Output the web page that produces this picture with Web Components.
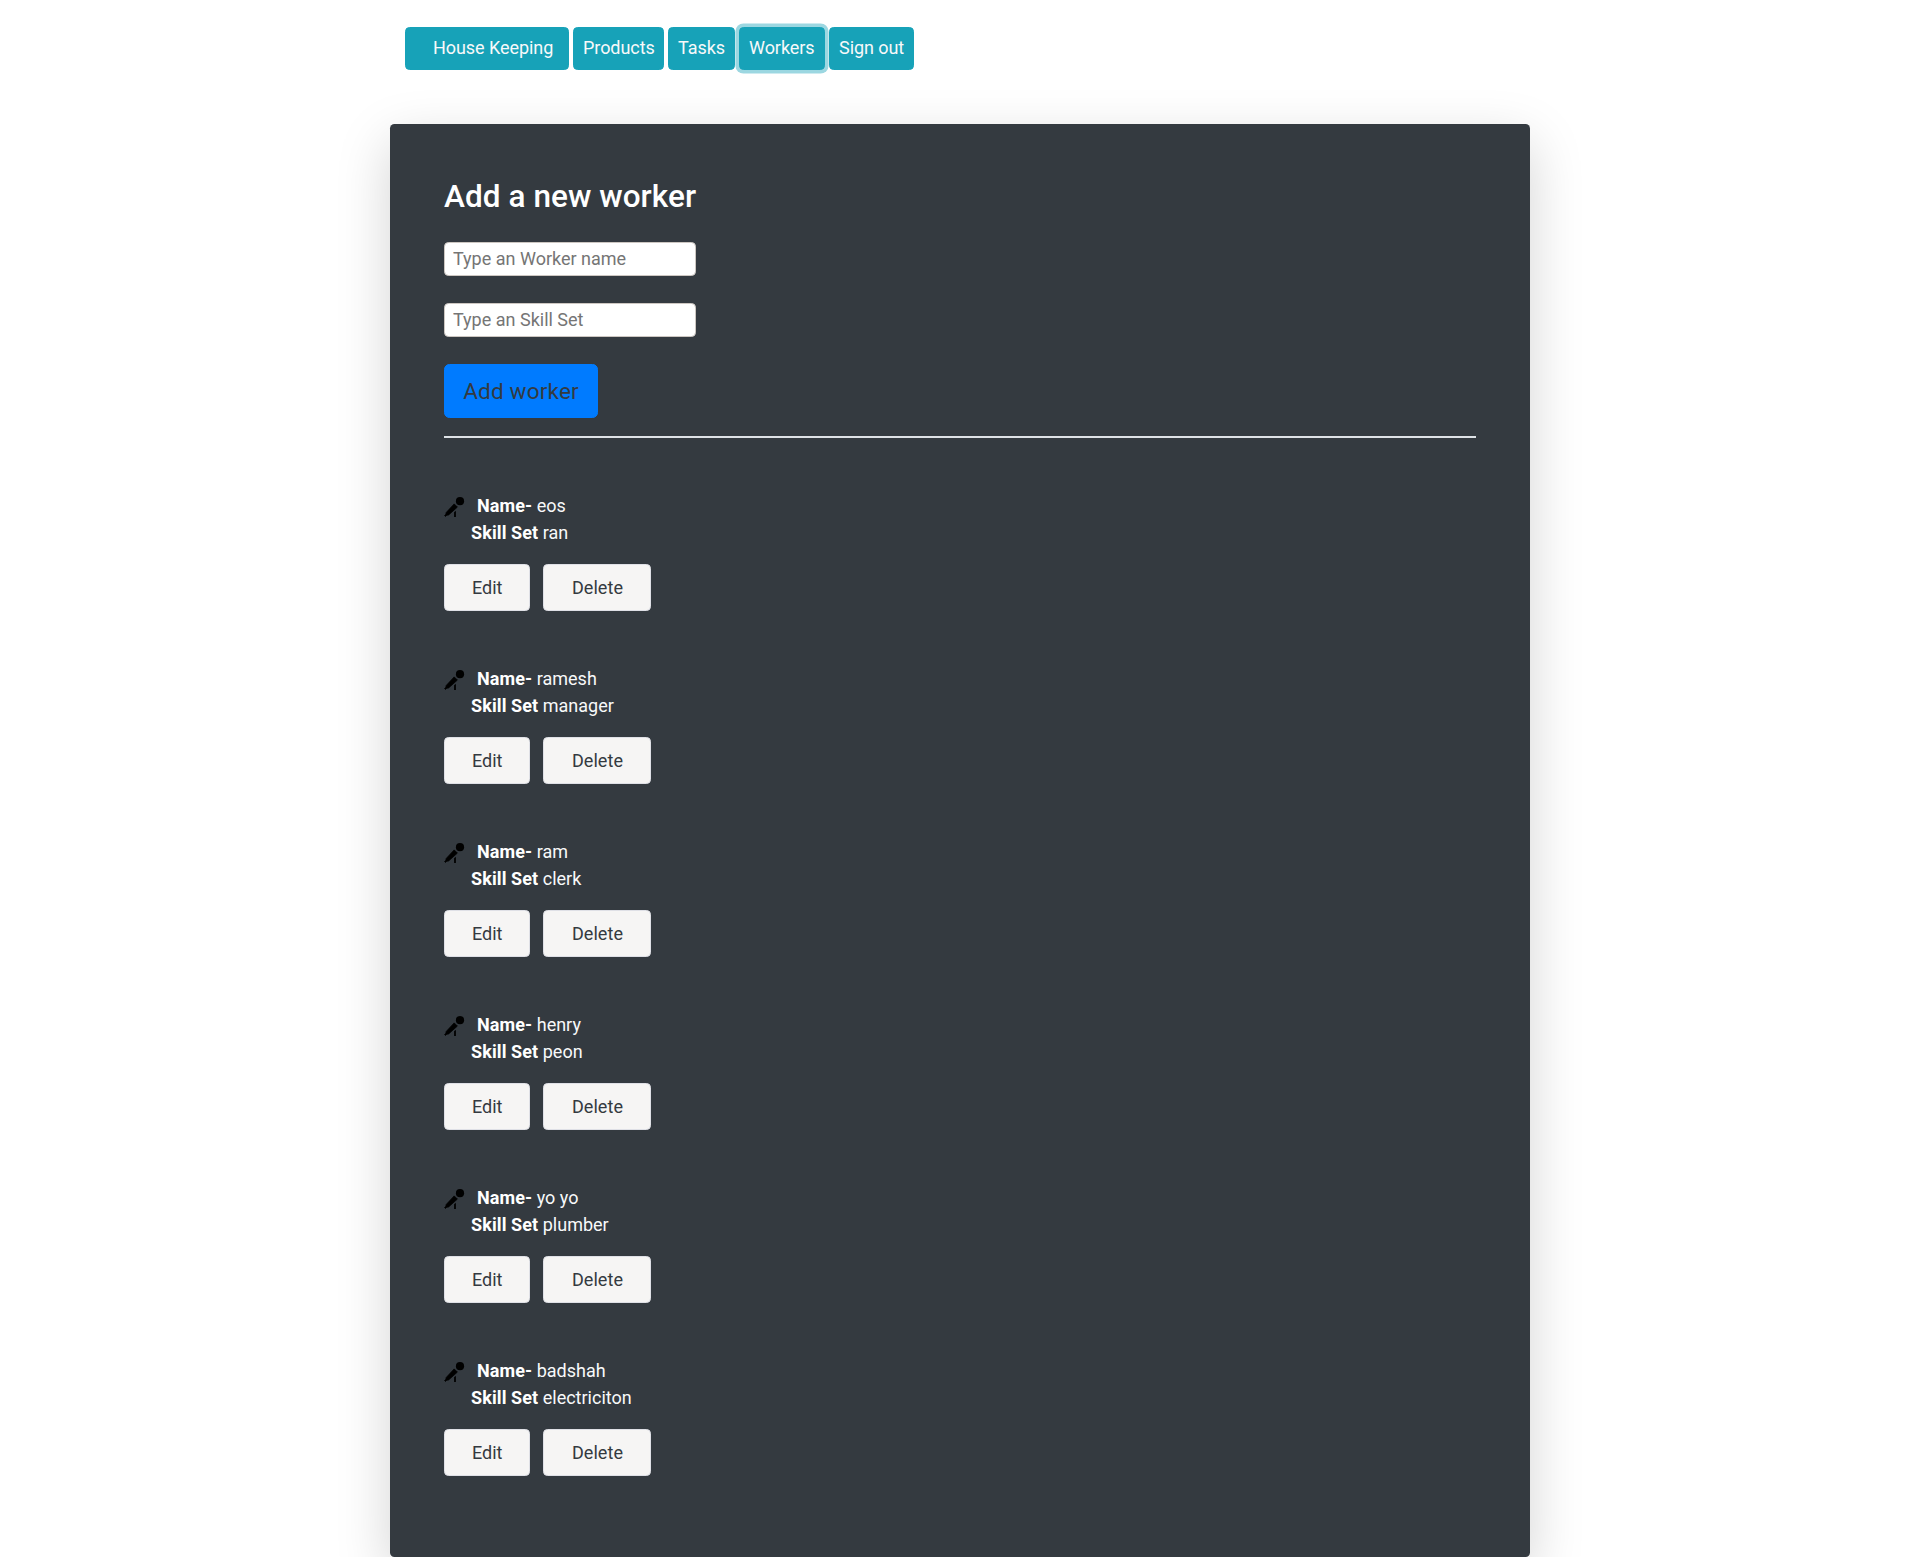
<!DOCTYPE html>
<html lang="en">
<head>
<meta charset="utf-8">
<title>Workers</title>
<style>
html{font-size:18px}
body{margin:0;background:#fff;font:400 18px/1.5 Roboto,sans-serif;color:#f8f9fa}
</style>
</head>
<body>
<worker-app></worker-app>
<script>
const define = (name, html, setup) => {
  const tpl = document.createElement('template');
  tpl.innerHTML = html;
  customElements.define(name, class extends HTMLElement {
    connectedCallback() {
      if (this.shadowRoot) return;
      this.attachShadow({mode: 'open'}).append(tpl.content.cloneNode(true));
      if (setup) setup(this, this.shadowRoot);
    }
  });
};

define('nav-button', `
<style>
:host{display:block;box-sizing:border-box;height:43px;padding:6px 0 8px 9px;border:1px solid #17a2b8;border-radius:4.5px;background:#17a2b8;color:#f8f9fa;line-height:27px;white-space:nowrap}
:host([brand]){padding-left:27px}
:host([focused]){box-shadow:0 0 0 3.6px rgba(58,176,195,.5)}
</style><slot></slot>`);

define('app-nav', `
<style>
:host{display:flex;gap:4px;padding:27px 0 0 15px;height:97px}
nav-button{width:var(--w);letter-spacing:-.06px}
</style>
<nav-button brand style="--w:164px">House Keeping</nav-button><nav-button style="--w:91px">Products</nav-button><nav-button style="--w:67px">Tasks</nav-button><nav-button focused style="--w:86px">Workers</nav-button><nav-button style="--w:85px">Sign out</nav-button>`);

define('worker-field', `
<style>
:host{display:block;height:61px}
input{display:block;box-sizing:border-box;width:252px;height:34px;padding:0 8px 2px;border:1px solid #cdc7c2;border-radius:4.5px;background:#fff;color:#343a40;font:inherit}
input::placeholder{color:#757575;opacity:1}
</style><input type="text">`, (host, root) => {
  root.querySelector('input').placeholder = host.getAttribute('label');
});

define('action-button', `
<style>
:host{display:block}
button{display:block;box-sizing:border-box;height:47px;padding:0 27px;border:1px solid #dfe0e6;border-radius:4.5px;background:#f6f5f4;color:#343a40;font:inherit;white-space:nowrap}
:host([wide]) button{width:108px;padding:0;letter-spacing:.06px}
:host([primary]) button{width:154px;height:54px;padding:1px 0 0;border-color:#007bff;border-radius:5.4px;background:#007bff;font-size:22.5px;letter-spacing:.2px}
</style><button type="button"><slot></slot></button>`);

define('worker-icon', `
<style>:host{display:block;width:21px;height:21px}svg{display:block}</style>
<svg width="21" height="21" viewBox="0 0 21 21"><circle cx="16" cy="4.2" r="4.1"/><path d="M10.2 6.9 13.4 10.1 4.6 17.9 2.8 18.2 1.5 19.4.6 18.6 1.9 17.2 2.2 15.5Z" stroke="#000" stroke-width=".8" stroke-linejoin="round"/><path d="M10.1 15.2 11.9 13.7V20H10.1Z"/></svg>`);

define('worker-item', `
<style>
:host{display:block;height:119px;padding-bottom:54px}
.name{display:flex;height:27px}
worker-icon{margin:4.5px 12px 0 0}
.skill{height:27px;padding-left:27px}
b{font-weight:700;letter-spacing:.1px;color:#fff}
.actions{display:flex;gap:13px;padding-top:18px}
</style>
<div class="name"><worker-icon></worker-icon><div><b>Name-</b> <span id="n"></span></div></div>
<div class="skill"><b>Skill Set</b> <span id="s"></span></div>
<div class="actions"><action-button>Edit</action-button><action-button wide>Delete</action-button></div>`, (host, root) => {
  root.querySelector('#n').textContent = host.getAttribute('name');
  root.querySelector('#s').textContent = host.getAttribute('skill');
});

define('worker-panel', `
<style>
:host{display:block;box-sizing:border-box;height:1433px;padding:54px;border-radius:4.5px;background:#343a40;box-shadow:0 18px 54px rgba(0,0,0,.175)}
h3{margin:0;height:64px;font-size:31.5px;line-height:37.8px;font-weight:500;letter-spacing:.06px;color:#fff;white-space:nowrap}
.line{height:2px;margin:18px 0 54px;background:#dee2e6}
</style>
<h3>Add a new worker</h3>
<worker-field label="Type an Worker name"></worker-field>
<worker-field label="Type an Skill Set"></worker-field>
<action-button primary>Add worker</action-button>
<div class="line"></div>
<worker-item name="eos" skill="ran"></worker-item>
<worker-item name="ramesh" skill="manager"></worker-item>
<worker-item name="ram" skill="clerk"></worker-item>
<worker-item name="henry" skill="peon"></worker-item>
<worker-item name="yo yo" skill="plumber"></worker-item>
<worker-item name="badshah" skill="electriciton"></worker-item>`);

define('worker-app', `
<style>
:host{display:block;height:1557px;overflow:hidden}
main{width:1140px;margin:0 auto}
</style>
<main><app-nav></app-nav><worker-panel></worker-panel></main>`);
</script>
</body>
</html>
